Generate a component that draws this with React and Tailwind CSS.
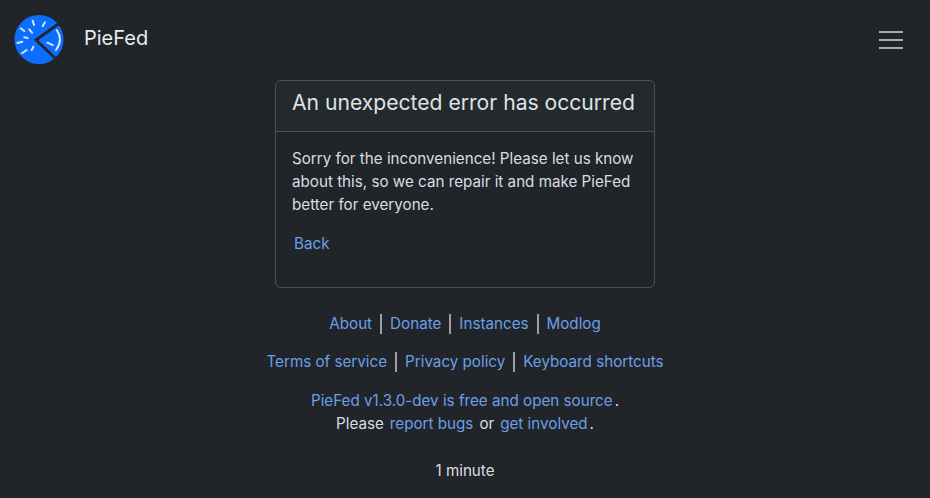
const font = { fontFamily: "Inter, sans-serif" };

function Logo() {
  return (
    <svg width="50" height="50" viewBox="0 0 50 50" className="block">
      <circle cx="25" cy="25.5" r="24.5" fill="#0d6efd" />
      <path d="M45 9.5 L22 26 L41 44" fill="none" stroke="#212529" strokeWidth="2.8" strokeLinejoin="miter" />
      <path d="M42.7 16 Q49.5 26 42 36" fill="none" stroke="#e4eeff" strokeWidth="1.8" strokeLinecap="round" />
      <g stroke="#d6e5ff" strokeWidth="2" strokeLinecap="round" fill="none">
        <path d="M18.7 6.7 L20 11" />
        <path d="M31 8.3 L28.7 12" />
        <path d="M6.7 14.3 L10.3 17" />
        <path d="M15.3 15.3 L18 18.7" />
        <path d="M10.3 23.3 L13.7 24" />
        <path d="M3.3 29 L8.3 27.7" />
        <path d="M8 39.3 L12.7 36" />
        <path d="M19.3 32.7 L17.7 36" />
        <path d="M33.3 28.7 L38.7 31" />
      </g>
    </svg>
  );
}

function FootLink({ children }) {
  return <a href="#" className="text-[#6b9fe8]">{children}</a>;
}

function Sep() {
  return <span className="w-[2px] h-[20px] bg-[#dee2e6]/65 mx-2" />;
}

export default function App() {
  return (
    <div style={font} className="w-[930px] h-[498px] overflow-hidden bg-[#212529] text-[#d9dde1] text-[15.2px] leading-[22.8px]">
      <header className="h-[80px] flex items-center justify-between pl-[14px] pr-[27px]">
        <a href="#" className="flex items-center gap-[20px] -mt-[2px]">
          <Logo />
          <span className="text-[20px] leading-[30px] -mt-[2px] text-[#e9ecef]">PieFed</span>
        </a>
        <button className="flex flex-col gap-[6px]">
          <span className="block w-[24px] h-[2px] bg-[#a9acaf]" />
          <span className="block w-[24px] h-[2px] bg-[#a9acaf]" />
          <span className="block w-[24px] h-[2px] bg-[#a9acaf]" />
        </button>
      </header>

      <main className="w-[380px] mx-auto border border-[#495057] rounded-md">
        <div className="h-[51px] px-4 border-b border-[#495057] bg-[#2b2f33]/40">
          <h1 className="text-[21.12px] leading-[43px] font-normal whitespace-nowrap text-[#dee2e6]">An unexpected error has occurred</h1>
        </div>
        <div className="h-[155px] px-4 pt-[16px]">
          <p>Sorry for the inconvenience! Please let us know about this, so we can repair it and make PieFed better for everyone.</p>
          <a href="#" className="block mt-[17px] ml-[2px] text-[#6b9fe8]">Back</a>
        </div>
      </main>

      <footer className="mt-[24px] flex flex-col items-center">
        <div className="flex items-center h-[24px]">
          <FootLink>About</FootLink><Sep />
          <FootLink>Donate</FootLink><Sep />
          <FootLink>Instances</FootLink><Sep />
          <FootLink>Modlog</FootLink>
        </div>
        <div className="flex items-center h-[24px] mt-[14px]">
          <FootLink>Terms of service</FootLink><Sep />
          <FootLink>Privacy policy</FootLink><Sep />
          <FootLink>Keyboard shortcuts</FootLink>
        </div>
        <div className="mt-[16px]"><FootLink>PieFed v1.3.0-dev is free and open source</FootLink><span className="ml-[2px]">.</span></div>
        <div className="flex gap-[6px]">
          <span>Please</span>
          <FootLink>report bugs</FootLink>
          <span>or</span>
          <span><FootLink>get involved</FootLink><span className="ml-[2px]">.</span></span>
        </div>
        <div className="mt-[24px]">1 minute</div>
      </footer>
    </div>
  );
}
